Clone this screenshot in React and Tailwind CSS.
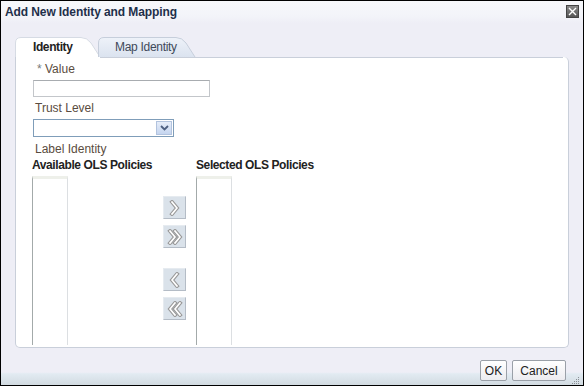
import React from 'react';

const font = { fontFamily: '"Liberation Sans", Arial, sans-serif' };

// Chevron glyph: white stroke with grey outline, like the ADF shuttle icons
const Chevron = ({ double, left }) => {
  const one = left ? 'M8 2 L3 8 L8 14' : 'M3 2 L8 8 L3 14';
  const two = left ? 'M13 2 L8 8 L13 14' : 'M8 2 L13 8 L8 14';
  const w = double ? 16 : 11;
  return (
    <svg width={w} height="16" viewBox={`0 0 ${w} 16`}>
      <g fill="none" strokeLinecap="square" strokeLinejoin="miter">
        <path d={one} stroke="#999" strokeWidth="3.8" />
        {double && <path d={two} stroke="#999" strokeWidth="3.8" />}
        <path d={one} stroke="#ffffff" strokeWidth="1.6" />
        {double && <path d={two} stroke="#ffffff" strokeWidth="1.6" />}
      </g>
    </svg>
  );
};

const ShuttleButton = ({ double, left }) => (
  <div className="w-[23px] h-[23px] flex items-center justify-center bg-[#dae2ea] border border-[#e6ebf0] border-r-[#b4bcc6] border-b-[#b4bcc6]">
    <Chevron double={double} left={left} />
  </div>
);

const ListBox = () => (
  <div className="w-[36px] flex-1 bg-white border-l border-l-[#a3aaaa] border-r border-r-[#dcdfe2] border-t-[3px] border-t-[#eef0ea]" />
);

const Tab = ({ active, children, width }) => (
  <div className="relative h-[20px] flex items-center" style={{ width }}>
    <svg className="absolute inset-0" width={width} height="20" viewBox={`0 0 ${width} 20`}>
      <defs>
        <linearGradient id="tabg" x1="0" y1="0" x2="0" y2="1">
          <stop offset="0" stopColor="#eef2f9" />
          <stop offset="1" stopColor="#dbe3ef" />
        </linearGradient>
      </defs>
      <path
        d={`M0.5 20 L0.5 6 Q0.5 0.5 6 0.5 L${width - 20} 0.5 Q${width - 14} 0.5 ${width - 10} 6 L${width - 1} 20`}
        fill={active ? '#ffffff' : 'url(#tabg)'}
        stroke={active ? '#d6dbe4' : '#c6cedb'}
      />
    </svg>
    <span className={`relative text-[12px] ${active ? 'font-bold text-[#222] pl-[18px] tracking-[-0.4px]' : 'text-[#3f4a5a] pl-[17px] tracking-[-0.3px]'}`}>
      {children}
    </span>
  </div>
);

export default function App() {
  return (
    <div style={font} className="w-[584px] h-[386px] border border-black bg-[#eeeef6] flex flex-col overflow-hidden">
      {/* title bar */}
      <div className="h-[22px] shrink-0 flex items-center justify-between pl-[4px] pr-[4px] bg-[linear-gradient(#f7f8fb_0%,#f3f4f9_70%,#eeeef6_100%)]">
        <span className="text-[12px] font-bold text-[#1e2f4a] tracking-[-0.1px]">Add New Identity and Mapping</span>
        <div className="w-[13px] h-[13px] flex items-center justify-center bg-[linear-gradient(#8a8a8a,#555)] border border-[#444] mt-[-1px]">
          <svg width="9" height="9" viewBox="0 0 9 9">
            <path d="M1 1 L8 8 M8 1 L1 8" stroke="#fff" strokeWidth="1.4" />
          </svg>
        </div>
      </div>

      {/* body */}
      <div className="flex-1 flex flex-col px-[14px] pt-[14px]">
        <div className="flex items-end">
          <Tab active width={86}>Identity</Tab>
          <div className="-ml-[3px]">
            <Tab width={98}>Map Identity</Tab>
          </div>
        </div>
        <div className="h-[291px] bg-white border border-[#c9cfda] border-t-0 rounded-b-[5px] rounded-tr-[5px] relative flex flex-col pl-[16px] pr-[10px] pb-[2px]">
          <div className="absolute top-0 left-[84px] right-[5px] h-px bg-[#c9cfda]" />
          <div className="text-[12px] text-[#5a4c40] pl-[5px] mt-[5px] leading-[14px]">
            <span className="text-[#7a7a7a]">*</span> Value
          </div>
          <div className="mt-[4px] ml-[1px] w-[177px] h-[17px] border border-[#c3c6ca] border-t-[#a8acb0]" />
          <div className="text-[12px] text-[#5a4c40] pl-[3px] mt-[4px] leading-[14px]">Trust Level</div>
          <div className="mt-[4px] ml-[1px] w-[141px] h-[18px] border border-[#7f9db9] flex justify-end items-stretch p-[1px]">
            <div className="w-[16px] bg-[linear-gradient(#e6edf9,#c5d5ef)] border border-[#b2c3de] flex items-center justify-center">
              <svg width="9" height="6" viewBox="0 0 9 6">
                <path d="M1 1 L4.5 4.5 L8 1" fill="none" stroke="#4d5f80" strokeWidth="1.8" />
              </svg>
            </div>
          </div>
          <div className="text-[12px] text-[#5a4c40] pl-[3px] mt-[5px] leading-[14px]">Label Identity</div>
          <div className="flex flex-1 mt-[2px] min-h-0">
            <div className="w-[131px] flex flex-col">
              <div className="text-[12px] font-bold text-[#222] leading-[14px] mb-[4px] tracking-[-0.4px]">Available OLS Policies</div>
              <ListBox />
            </div>
            <div className="w-[23px] flex flex-col pt-[38px]">
              <ShuttleButton />
              <div className="h-[6px]" />
              <ShuttleButton double />
              <div className="h-[20px]" />
              <ShuttleButton left />
              <div className="h-[6px]" />
              <ShuttleButton double left />
            </div>
            <div className="w-[150px] flex flex-col ml-[10px]">
              <div className="text-[12px] font-bold text-[#222] leading-[14px] mb-[4px] tracking-[-0.4px]">Selected OLS Policies</div>
              <ListBox />
            </div>
          </div>
        </div>
      </div>

      {/* footer */}
      <div className="h-[39px] shrink-0 relative flex items-start justify-end pr-[17px] pt-[12px] bg-[linear-gradient(#eeeef6_0%,#eeeef6_62%,#e2ebf2_66%,#dae3ea_80%,#cfd8de_100%)]">
        <div className="flex gap-[5px]">
          <button className="w-[27px] h-[21px] text-[12px] text-[#222] bg-[linear-gradient(#ffffff,#ececf0)] border border-[#9aa0a8] rounded-[2px]">OK</button>
          <button className="w-[54px] h-[21px] text-[12px] text-[#222] bg-[linear-gradient(#ffffff,#ececf0)] border border-[#9aa0a8] rounded-[2px]">Cancel</button>
        </div>
        <svg className="absolute right-[3px] bottom-[2px]" width="9" height="9" viewBox="0 0 9 9">
          {[[7, 1], [5, 3], [7, 3], [3, 5], [5, 5], [7, 5], [1, 7], [3, 7], [5, 7], [7, 7]].map(([x, y], i) => (
            <rect key={i} x={x} y={y} width="1" height="1" fill="#8a9096" />
          ))}
        </svg>
      </div>
    </div>
  );
}
